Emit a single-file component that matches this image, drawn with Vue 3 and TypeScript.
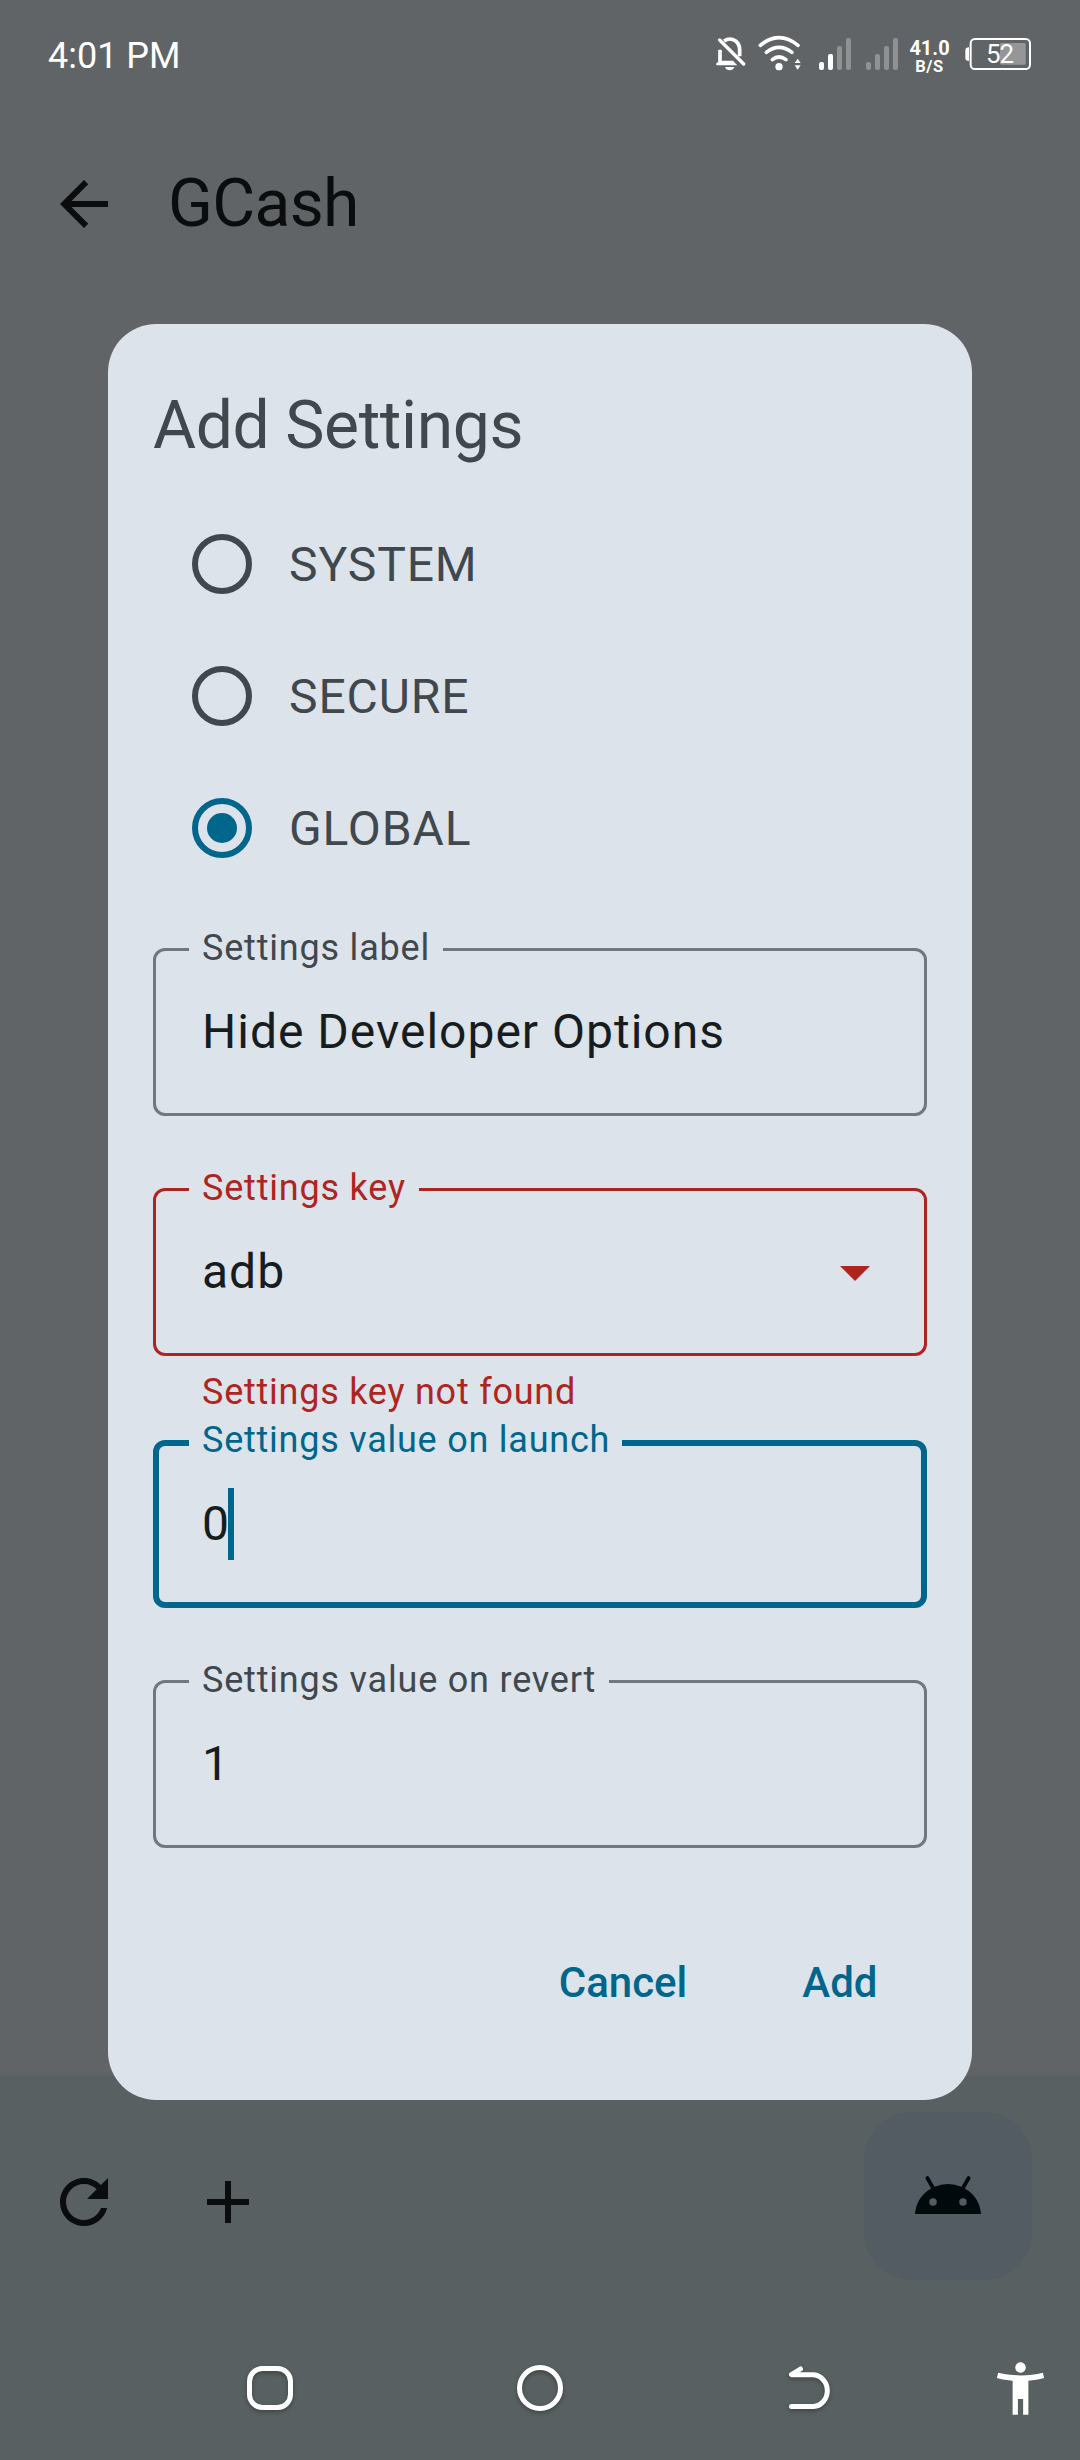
<script setup lang="ts">
import { ref } from 'vue'

interface Field {
  id: string
  label: string
  value: string
  state: 'idle' | 'error' | 'focused'
  dropdown?: boolean
  helper?: string
}

const scopes: string[] = ['SYSTEM', 'SECURE', 'GLOBAL']
const selected = ref<string>('GLOBAL')

const fields: Field[] = [
  { id: 'label', label: 'Settings label', value: 'Hide Developer Options', state: 'idle' },
  {
    id: 'key',
    label: 'Settings key',
    value: 'adb',
    state: 'error',
    dropdown: true,
    helper: 'Settings key not found',
  },
  { id: 'launch', label: 'Settings value on launch', value: '0', state: 'focused' },
  { id: 'revert', label: 'Settings value on revert', value: '1', state: 'idle' },
]

const bars = [
  { x: 387, y: 126 },
  { x: 414, y: 102 },
  { x: 441, y: 78 },
  { x: 468, y: 54 },
]
const signals = [
  { id: 'sim1', level: 2 },
  { id: 'sim2', level: 0 },
]
</script>

<template>
  <div class="screen">
    <header class="status">
      <span class="clock">4:01 PM</span>
      <div class="status-icons">
        <svg class="bell" width="30" height="34" viewBox="77 50 90 102" fill="none">
          <path d="M89 88V129M101 62Q119 50 136 62Q148 72 148 88V108" stroke="#fff" stroke-width="11" />
          <path d="M78 135V129L90 121H128L141 135Z" fill="#fff" />
          <path d="M88 59L160 131" stroke="#fff" stroke-width="10" stroke-linecap="round" />
          <path d="M104 140H132Q128 150 118 150T104 140Z" fill="#fff" />
        </svg>
        <svg class="wifi" width="43" height="36" viewBox="202 45 129 108" fill="none">
          <g stroke="#fff" stroke-width="11" stroke-linecap="round">
            <path d="M209 76Q265 30 322 76" />
            <path d="M227 97Q265 67 304 97" />
            <path d="M245 119Q265 103 286 119" />
          </g>
          <circle cx="265" cy="140" r="11" fill="#fff" />
          <path d="M312 129L321 116L330 129ZM312 136L321 149L330 136Z" fill="#fff" />
        </svg>
        <svg
          v-for="s in signals"
          :key="s.id"
          class="signal"
          width="32"
          height="32"
          viewBox="387 54 96 96"
        >
          <rect
            v-for="(b, i) in bars"
            :key="b.x"
            :x="b.x"
            :y="b.y"
            width="15"
            :height="150 - b.y"
            rx="6"
            :fill="i < s.level ? '#fff' : '#8f9192'"
          />
        </svg>
        <div class="speed">
          <span class="speed-num">41.0</span>
          <span class="speed-unit">B/S</span>
        </div>
        <div class="battery">
          <svg width="66" height="32" viewBox="824 54 198 96" fill="none">
            <path d="M836 82Q825 82 825 91V114Q825 123 836 123Z" fill="#fff" />
            <rect x="929" y="69" width="77" height="65" rx="4" fill="#949697" />
            <rect x="841" y="57" width="178" height="90" rx="13" stroke="#fff" stroke-width="6" />
          </svg>
          <span class="battery-num">52</span>
        </div>
      </div>
    </header>

    <div class="appbar">
      <button class="icon-btn" aria-label="Back">
        <svg width="72" height="72" viewBox="0 0 24 24">
          <path d="M20 11H7.83l5.59-5.59L12 4l-8 8 8 8 1.41-1.41L7.83 13H20z" fill="#0a0c0d" />
        </svg>
      </button>
      <h1>GCash</h1>
    </div>

    <main class="content"></main>

    <footer class="bottom">
      <div class="actions">
        <button class="icon-btn" aria-label="Refresh">
          <svg width="72" height="72" viewBox="0 0 24 24">
            <path
              d="M17.65 6.35C16.2 4.9 14.21 4 12 4c-4.42 0-7.99 3.58-7.99 8s3.57 8 7.99 8c3.73 0 6.84-2.55 7.73-6h-2.08c-.82 2.33-3.04 4-5.65 4-3.31 0-6-2.69-6-6s2.69-6 6-6c1.66 0 3.14.69 4.22 1.78L13 11h7V4z"
              fill="#0a0c0d"
            />
          </svg>
        </button>
        <button class="icon-btn" aria-label="Add">
          <svg width="72" height="72" viewBox="0 0 24 24">
            <path d="M19 13h-6v6h-2v-6H5v-2h6V5h2v6h6z" fill="#0a0c0d" />
          </svg>
        </button>
        <button class="fab" aria-label="Launch">
          <svg width="72" height="72" viewBox="0 0 24 24">
            <path
              transform="translate(0 -2)"
              d="M17.6 11.48 19.44 8.3a.63.63 0 0 0-1.09-.63l-1.88 3.24a11.43 11.43 0 0 0-8.94 0L5.65 7.67a.63.63 0 0 0-1.09.63L6.4 11.48A10.81 10.81 0 0 0 1 20h22a10.81 10.81 0 0 0-5.4-8.52zM7 17.25A1.25 1.25 0 1 1 8.25 16 1.25 1.25 0 0 1 7 17.25zm10 0A1.25 1.25 0 1 1 18.25 16 1.25 1.25 0 0 1 17 17.25z"
              fill="#01090d"
            />
          </svg>
        </button>
      </div>
      <nav class="navbar">
        <svg class="nav-shadow recents" width="46" height="44" viewBox="0 0 46 44" fill="none">
          <rect x="2.5" y="2.5" width="41" height="39" rx="13" stroke="#fff" stroke-width="5" />
        </svg>
        <svg class="nav-shadow home" width="46" height="46" viewBox="0 0 46 46" fill="none">
          <circle cx="23" cy="23" r="20.5" stroke="#fff" stroke-width="5" />
        </svg>
        <svg class="nav-shadow back" width="42" height="44" viewBox="0 0 42 44" fill="none">
          <path
            d="M11.5 3L2.5 8.7H24.5A15 16 0 0 1 24.5 40.6H2.5"
            stroke="#fff"
            stroke-width="5"
            stroke-linecap="round"
            stroke-linejoin="round"
          />
        </svg>
        <svg class="a11y" width="63" height="63" viewBox="0 0 24 24">
          <path
            d="M20.5 6c-2.61.7-5.67 1-8.5 1s-5.89-.3-8.5-1L3 8c1.86.5 4 .83 6 1v13h2v-6h2v6h2V9c2-.17 4.14-.5 6-1l-.5-2zM12 6c1.1 0 2-.9 2-2s-.9-2-2-2-2 .9-2 2 .9 2 2 2z"
            fill="#fff"
          />
        </svg>
      </nav>
    </footer>

    <div class="overlay">
      <section class="dialog" role="dialog">
        <h2>Add Settings</h2>
        <div class="radios">
          <div v-for="s in scopes" :key="s" class="radio-row" @click="selected = s">
            <span class="radio" :class="{ on: s === selected }"></span>
            <span>{{ s }}</span>
          </div>
        </div>
        <div class="fields">
          <div v-for="f in fields" :key="f.id" class="field-group" :class="f.state">
            <div class="field">
              <span class="field-label">{{ f.label }}</span>
              <span class="value">{{ f.value }}</span>
              <span v-if="f.state === 'focused'" class="caret"></span>
              <svg v-if="f.dropdown" class="drop" width="72" height="72" viewBox="0 0 24 24">
                <path d="M7 10l5 5 5-5z" />
              </svg>
            </div>
            <p v-if="f.helper" class="helper">{{ f.helper }}</p>
          </div>
        </div>
        <div class="buttons">
          <button>Cancel</button>
          <button>Add</button>
        </div>
      </section>
    </div>
  </div>
</template>

<style>
body {
  margin: 0;
}
</style>

<style scoped>
.screen {
  position: relative;
  display: flex;
  flex-direction: column;
  width: 1080px;
  height: 2460px;
  overflow: hidden;
  background: #606466;
  font-family: Roboto, sans-serif;
  color: #0a0c0d;
}
.screen * {
  box-sizing: border-box;
}
button {
  border: 0;
  padding: 0;
  background: none;
  font: inherit;
  color: inherit;
}
svg {
  display: block;
  flex: none;
}
h1,
h2,
p {
  margin: 0;
  font-weight: 400;
}
.status {
  display: flex;
  justify-content: space-between;
  height: 108px;
  padding: 0 49px 0 48px;
  color: #fff;
}
.clock {
  font-size: 36px;
  line-height: 48px;
  padding-top: 32px;
}
.status-icons {
  display: flex;
  align-items: flex-start;
}
.bell {
  margin: 37px 12px 0 0;
}
.wifi {
  margin: 35px 18px 0 0;
}
.signal {
  margin: 38px 15px 0 0;
}
.speed {
  display: flex;
  flex-direction: column;
  align-items: center;
  width: 40px;
  margin: 38px 15.5px 0 -3px;
  font-weight: 700;
}
.speed-num {
  font-size: 20px;
  line-height: 20px;
}
.speed-unit {
  font-size: 16.5px;
  line-height: 16px;
  margin-top: 1px;
  letter-spacing: 0.5px;
}
.battery {
  position: relative;
  margin-top: 38px;
}
.battery-num {
  position: absolute;
  left: 21px;
  top: 2px;
  font-size: 26px;
  line-height: 28px;
  letter-spacing: -1px;
}
.appbar {
  display: flex;
  align-items: center;
  height: 192px;
  padding-left: 12px;
}
.appbar h1 {
  margin-left: 12px;
  font-size: 66px;
  line-height: 84px;
  letter-spacing: -0.7px;
}
.icon-btn {
  display: flex;
  align-items: center;
  justify-content: center;
  width: 144px;
  height: 144px;
}
.content {
  flex: 1;
}
.bottom {
  height: 384px;
  background: #586061;
}
.actions {
  display: flex;
  height: 240px;
  padding: 36px 48px 0 12px;
}
.actions .icon-btn {
  margin-top: 18px;
}
.fab {
  display: flex;
  align-items: center;
  justify-content: center;
  width: 168px;
  height: 168px;
  margin-left: auto;
  border-radius: 48px;
  background: #535b63;
}
.navbar {
  display: flex;
  align-items: center;
  height: 144px;
  padding-left: 247px;
}
.nav-shadow {
  filter: drop-shadow(0 2px 2px rgba(0, 0, 0, 0.3));
}
.recents {
  margin-right: 224px;
}
.home {
  margin-right: 226px;
}
.back {
  margin-right: 158px;
}
.a11y {
  margin-top: 1px;
}
.overlay {
  position: absolute;
  inset: 0;
  display: flex;
  justify-content: center;
  align-items: flex-start;
  padding-top: 324px;
}
.dialog {
  display: flex;
  flex-direction: column;
  width: 864px;
  height: 1776px;
  padding: 60px 45px 58px;
  border-radius: 48px;
  background: #dce3ea;
  color: #40484e;
}
h2 {
  font-size: 66px;
  line-height: 84px;
  letter-spacing: -0.4px;
}
.radios {
  margin-top: 30px;
}
.radio-row {
  display: flex;
  align-items: center;
  gap: 37px;
  height: 132px;
  padding-left: 39px;
  font-size: 48px;
  letter-spacing: 0.9px;
}
.radio {
  display: flex;
  align-items: center;
  justify-content: center;
  width: 60px;
  height: 60px;
  border: 6px solid #40484e;
  border-radius: 50%;
}
.radio.on {
  border-color: #00668b;
}
.radio.on::after {
  content: '';
  width: 30px;
  height: 30px;
  border-radius: 50%;
  background: #00668b;
}
.fields {
  margin-top: 54px;
}
.field-group {
  margin-bottom: 72px;
  --line: #70787e;
  --label: #40484e;
}
.field-group.error {
  margin-bottom: 24px;
  --line: #b0241f;
  --label: #b0241f;
}
.field-group.focused {
  --line: #00668b;
  --label: #00668b;
}
.field-group:last-child {
  margin-bottom: 0;
}
.field {
  position: relative;
  display: flex;
  align-items: flex-start;
  height: 168px;
  padding: 45px 33px 0 46px;
  border: 3px solid var(--line);
  border-radius: 12px;
}
.focused .field {
  border-width: 6px;
  padding: 42px 30px 0 43px;
}
.field-label {
  position: absolute;
  left: 33px;
  top: -27px;
  padding: 0 13px;
  background: #dce3ea;
  font-size: 36px;
  line-height: 48px;
  letter-spacing: 0.8px;
  color: var(--label);
}
.focused .field-label {
  left: 30px;
  top: -30px;
  padding-right: 12px;
  letter-spacing: 0.76px;
}
.value {
  font-size: 48px;
  line-height: 72px;
  letter-spacing: 1px;
  color: #171c1f;
}
.caret {
  width: 6px;
  height: 72px;
  margin-left: -1.5px;
  background: #00668b;
}
.drop {
  margin-left: auto;
  fill: var(--line);
}
.helper {
  padding: 12px 48px 0 49px;
  font-size: 36px;
  line-height: 48px;
  letter-spacing: 0.76px;
  color: var(--label);
}
.buttons {
  display: flex;
  justify-content: flex-end;
  gap: 19px;
  margin-top: auto;
  padding-right: 1.5px;
  color: #00668b;
}
.buttons button {
  height: 120px;
  padding: 0 48px;
  font-size: 42px;
  font-weight: 500;
}
</style>
